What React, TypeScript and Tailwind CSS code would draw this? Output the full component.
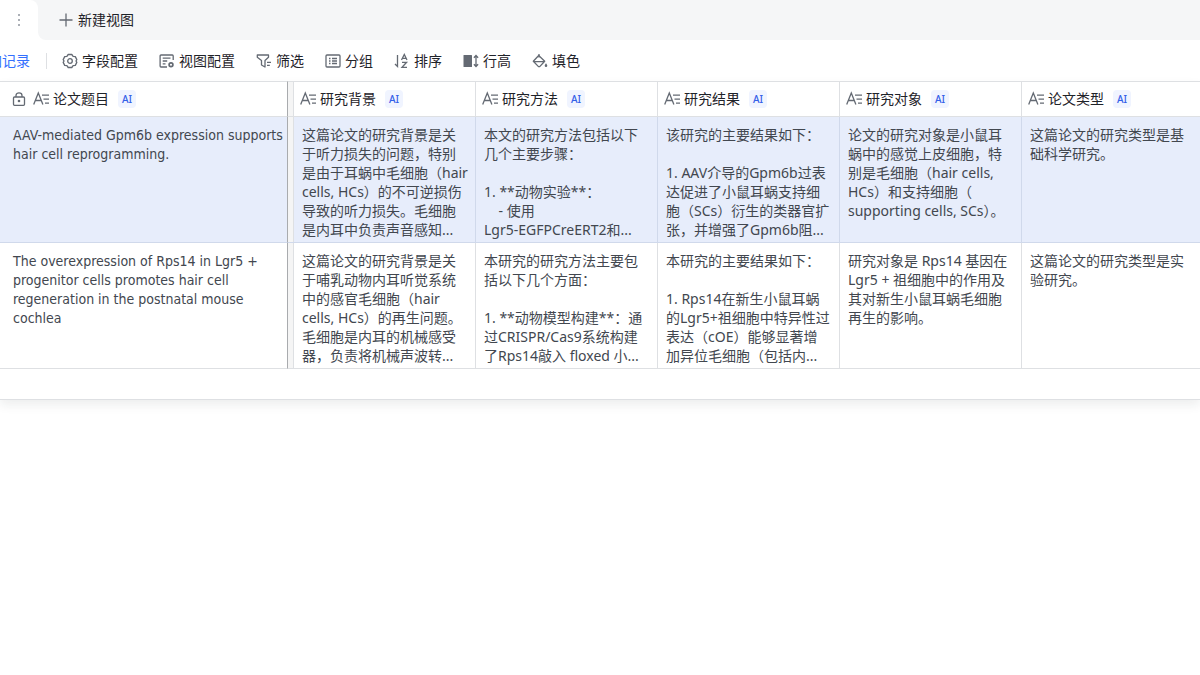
import type { ReactNode } from "react";

type Row = {
  selected: boolean;
  cells: string[];
};

const columns = [
  "论文题目",
  "研究背景",
  "研究方法",
  "研究结果",
  "研究对象",
  "论文类型",
];

const rows: Row[] = [
  {
    selected: true,
    cells: [
      "AAV-mediated Gpm6b expression supports\nhair cell reprogramming.",
      "这篇论文的研究背景是关\n于听力损失的问题，特别\n是由于耳蜗中毛细胞（hair\ncells, HCs）的不可逆损伤\n导致的听力损失。毛细胞\n是内耳中负责声音感知...",
      "本文的研究方法包括以下\n几个主要步骤：\n\n1. **动物实验**：\n    - 使用\nLgr5-EGFPCreERT2和...",
      "该研究的主要结果如下：\n\n1. AAV介导的Gpm6b过表\n达促进了小鼠耳蜗支持细\n胞（SCs）衍生的类器官扩\n张，并增强了Gpm6b阻...",
      "论文的研究对象是小鼠耳\n蜗中的感觉上皮细胞，特\n别是毛细胞（hair cells,\nHCs）和支持细胞（\nsupporting cells, SCs）。",
      "这篇论文的研究类型是基\n础科学研究。",
    ],
  },
  {
    selected: false,
    cells: [
      "The overexpression of Rps14 in Lgr5 +\nprogenitor cells promotes hair cell\nregeneration in the postnatal mouse\ncochlea",
      "这篇论文的研究背景是关\n于哺乳动物内耳听觉系统\n中的感官毛细胞（hair\ncells, HCs）的再生问题。\n毛细胞是内耳的机械感受\n器，负责将机械声波转...",
      "本研究的研究方法主要包\n括以下几个方面：\n\n1. **动物模型构建**：通\n过CRISPR/Cas9系统构建\n了Rps14敲入 floxed 小...",
      "本研究的主要结果如下：\n\n1. Rps14在新生小鼠耳蜗\n的Lgr5+祖细胞中特异性过\n表达（cOE）能够显著增\n加异位毛细胞（包括内...",
      "研究对象是 Rps14 基因在\nLgr5 + 祖细胞中的作用及\n其对新生小鼠耳蜗毛细胞\n再生的影响。",
      "这篇论文的研究类型是实\n验研究。",
    ],
  },
];

function Icon({ children }: { children: ReactNode }) {
  return (
    <svg
      viewBox="0 0 16 16"
      className="size-4 shrink-0 text-[#646a73]"
      fill="none"
      stroke="currentColor"
      strokeWidth="1.3"
      aria-hidden="true"
    >
      {children}
    </svg>
  );
}

const tools = [
  {
    label: "字段配置",
    icon: (
      <>
        <path
          d="M6.2 1.5h3.6l1.3 1.8 2.2.3 1.5 3-.8 1.4.8 1.4-1.5 3-2.2.3-1.3 1.8H6.2l-1.3-1.8-2.2-.3-1.5-3L2 8l-.8-1.4 1.5-3 2.2-.3z"
          strokeLinejoin="round"
        />
        <circle cx="8" cy="8" r="2.3" />
      </>
    ),
  },
  {
    label: "视图配置",
    icon: (
      <>
        <path d="M14.2 7V2.9a.9.9 0 0 0-.9-.9H2a.9.9 0 0 0-.9.9v10.2c0 .5.4.9.9.9h6" />
        <path d="M3.7 5.2h7.8M3.7 8h4.5M3.7 10.8h2.8" />
        <circle cx="12" cy="11.7" r="1.9" strokeWidth="1.7" />
      </>
    ),
  },
  {
    label: "筛选",
    icon: (
      <>
        <path
          d="M1.3 2h11.2v2.2L9 7.5V14l-3.5-2V7.5L1.3 4.2z"
          strokeLinejoin="round"
        />
        <path d="M11 9.3h4M11 12.3h2.8" />
      </>
    ),
  },
  {
    label: "分组",
    icon: (
      <>
        <rect x="1" y="2" width="14" height="12" rx="1" />
        <path d="M4 5.5h1.5M7 5.5h5M4 8h1.5M7 8h5M4 10.5h1.5M7 10.5h5" />
      </>
    ),
  },
  {
    label: "排序",
    icon: (
      <>
        <path d="M3.5 2v11.5L1 11" />
        <path d="M7.5 7l2.8-5.5L13 7M8.3 5.3h4M8 9.3h4.6L8 14.3h5" />
      </>
    ),
  },
  {
    label: "行高",
    icon: (
      <>
        <rect
          x="0.5"
          y="2"
          width="8.5"
          height="12"
          rx="0.5"
          fill="currentColor"
          stroke="none"
        />
        <path d="M13 3v10M10.9 4.8l2.1-2.3 2.1 2.3M10.9 11.2l2.1 2.3 2.1-2.3" />
      </>
    ),
  },
  {
    label: "填色",
    icon: (
      <>
        <path
          d="M6.7 2.5L1.3 8.3l5.2 5.3h1.2l5-5.3zM1.5 8.7h11"
          strokeLinejoin="round"
        />
        <path d="M7 4.5V1" />
        <path
          d="M14 10.3c-.8 1.2-1.3 1.9-1.3 2.5a1.3 1.3 0 0 0 2.6 0c0-.6-.5-1.3-1.3-2.5z"
          fill="currentColor"
          stroke="none"
        />
      </>
    ),
  },
];

function TextFieldIcon() {
  return (
    <Icon>
      <path d="M0.7 13.5L5.3 2 9.9 13.5M2.3 9.5h6" />
      <path d="M9 4.2h7M10.5 8.2H16M12 12.2h4" />
    </Icon>
  );
}

function LockIcon() {
  return (
    <svg
      viewBox="0 0 14 14"
      className="size-3.5 shrink-0 text-[#646a73]"
      fill="none"
      stroke="currentColor"
      strokeWidth="1.3"
      aria-hidden="true"
    >
      <rect x="1.5" y="5" width="11" height="8.3" rx="1" />
      <path d="M4 5V3.5c0-3.5 6-3.5 6 0V5" />
      <circle cx="7" cy="9" r="1.3" fill="currentColor" stroke="none" />
    </svg>
  );
}

export default function App() {
  return (
    <main className="min-h-screen bg-white font-['Noto_Sans','Noto_Sans_CJK_SC',sans-serif] text-sm text-[#1f2329]">
      <header className="flex h-10">
        <div className="w-[38px] bg-[#f5f6f7]">
          <div className="flex h-full items-center justify-center rounded-tr-lg bg-white">
            <button type="button" aria-label="更多" className="p-1">
              <svg
                viewBox="0 0 4 14"
                className="h-3.5 w-1 text-[#8f959e]"
                fill="currentColor"
                aria-hidden="true"
              >
                <circle cx="2" cy="2" r="1" />
                <circle cx="2" cy="7" r="1" />
                <circle cx="2" cy="12" r="1" />
              </svg>
            </button>
          </div>
        </div>
        <div className="flex flex-1 items-center rounded-bl-lg bg-[#f5f6f7] px-5">
          <button type="button" className="flex items-center gap-1">
            <Icon>
              <path d="M8 1.5v13M1.5 8h13" />
            </Icon>
            新建视图
          </button>
        </div>
      </header>

      <nav className="flex h-[41px] items-center overflow-hidden">
        <button
          type="button"
          className="-ml-[26px] shrink-0 whitespace-nowrap text-[#3370ff]"
        >
          添加记录
        </button>
        <span className="ml-4 mr-[15px] h-4 w-px shrink-0 bg-[#dee0e3]" />
        <div className="flex gap-[21px]">
          {tools.map((tool) => (
            <button
              key={tool.label}
              type="button"
              className="flex items-center gap-1 whitespace-nowrap"
            >
              <Icon>{tool.icon}</Icon>
              {tool.label}
            </button>
          ))}
        </div>
      </nav>

      <section className="overflow-hidden border-b border-[#dee0e3] pb-[30px] shadow-[0_5px_10px_rgba(31,35,41,0.08)]">
        <table className="w-full table-fixed border-separate border-spacing-0">
          <colgroup>
            <col className="w-[288px]" />
            <col className="w-[188px]" />
            <col className="w-[182px]" />
            <col className="w-[182px]" />
            <col className="w-[182px]" />
            <col />
          </colgroup>
          <thead>
            <tr className="h-9">
              {columns.map((name, i) => (
                <th
                  key={name}
                  scope="col"
                  className={`border-y border-r border-[#dee0e3] p-0 font-normal last:border-r-0 ${
                    i === 0 ? "border-r-[#a9abae]" : ""
                  }`}
                >
                  <div className="flex h-[34px]">
                    {i === 1 && (
                      <span className="w-[6px] shrink-0 border-r border-[#dee0e3] bg-[#f5f5f5]" />
                    )}
                    <div
                      className={`flex items-center ${
                        i === 0 ? "pl-3" : "pl-1.5"
                      }`}
                    >
                      {i === 0 && (
                        <span className="mr-[7px]">
                          <LockIcon />
                        </span>
                      )}
                      <TextFieldIcon />
                      <span className="ml-1 mr-[9px] whitespace-nowrap">
                        {name}
                      </span>
                      <span className="flex size-[18px] items-center justify-center rounded bg-[#f0f4ff] text-[10px] font-medium text-[#3360e8]">
                        AI
                      </span>
                    </div>
                  </div>
                </th>
              ))}
            </tr>
          </thead>
          <tbody>
            {rows.map((row) => (
              <tr
                key={row.cells[0]}
                className={row.selected ? "bg-[#e7edfb]" : "bg-white"}
              >
                {row.cells.map((text, i) => (
                  <td
                    key={columns[i]}
                    className={`border-b border-r p-0 align-top last:border-r-0 ${
                      row.selected ? "border-[#d0d9eb]" : "border-[#dee0e3]"
                    } ${i === 0 ? "border-r-[#a9abae]" : ""}`}
                  >
                    <div className="flex h-[125px]">
                      {i === 1 && (
                        <span className="w-[6px] shrink-0 border-r border-[#dee0e3] bg-[#f5f5f5]" />
                      )}
                      <p
                        className={`whitespace-pre leading-[19px] text-[#42474f] ${
                          i === 0
                            ? "pl-[13px] pt-[9px] font-['DejaVu_Sans_Condensed','Noto_Sans',sans-serif]"
                            : "pl-2 pt-2"
                        }`}
                      >
                        {text}
                      </p>
                    </div>
                  </td>
                ))}
              </tr>
            ))}
          </tbody>
        </table>
      </section>
    </main>
  );
}
